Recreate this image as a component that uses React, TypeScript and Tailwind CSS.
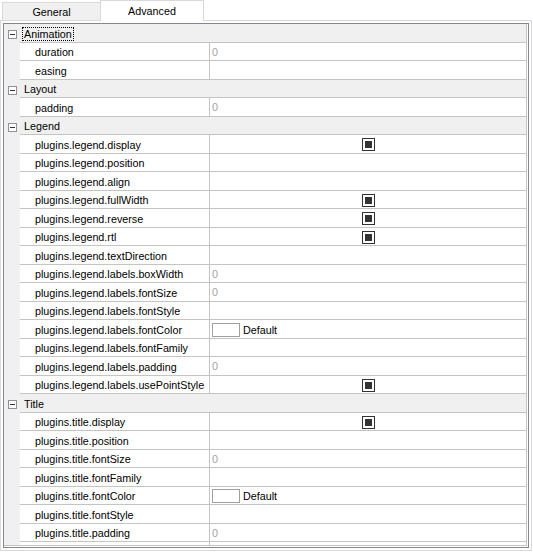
type ValueKind = "num" | "check" | "color" | undefined;

interface Prop {
  name: string;
  value?: ValueKind;
}

interface Section {
  title: string;
  focused?: boolean;
  rows: Prop[];
}

const sections: Section[] = [
  {
    title: "Animation",
    focused: true,
    rows: [{ name: "duration", value: "num" }, { name: "easing" }],
  },
  { title: "Layout", rows: [{ name: "padding", value: "num" }] },
  {
    title: "Legend",
    rows: [
      { name: "plugins.legend.display", value: "check" },
      { name: "plugins.legend.position" },
      { name: "plugins.legend.align" },
      { name: "plugins.legend.fullWidth", value: "check" },
      { name: "plugins.legend.reverse", value: "check" },
      { name: "plugins.legend.rtl", value: "check" },
      { name: "plugins.legend.textDirection" },
      { name: "plugins.legend.labels.boxWidth", value: "num" },
      { name: "plugins.legend.labels.fontSize", value: "num" },
      { name: "plugins.legend.labels.fontStyle" },
      { name: "plugins.legend.labels.fontColor", value: "color" },
      { name: "plugins.legend.labels.fontFamily" },
      { name: "plugins.legend.labels.padding", value: "num" },
      { name: "plugins.legend.labels.usePointStyle", value: "check" },
    ],
  },
  {
    title: "Title",
    rows: [
      { name: "plugins.title.display", value: "check" },
      { name: "plugins.title.position" },
      { name: "plugins.title.fontSize", value: "num" },
      { name: "plugins.title.fontFamily" },
      { name: "plugins.title.fontColor", value: "color" },
      { name: "plugins.title.fontStyle" },
      { name: "plugins.title.padding", value: "num" },
      // clipped by the bottom edge
      { name: "" },
    ],
  },
];

function MinusBox() {
  return (
    <span className="flex h-[9px] w-[9px] items-center justify-center border border-[#919191] bg-white">
      <span className="h-px w-[5px] bg-[#333]" />
    </span>
  );
}

function CategoryRow({ s }: { s: Section }) {
  return (
    <div className="flex h-[18.5px] shrink-0 bg-[#f0f0f0]">
      <div className="flex w-[16px] shrink-0 items-center pl-[4px] pt-[3px]">
        <MinusBox />
      </div>
      <div className="flex flex-1 items-center border-b border-[#c4c4c4] pl-[2px] pt-[2px]">
        <span
          className={
            s.focused
              ? "border border-dotted border-black px-px leading-[12px]"
              : "border border-transparent px-px leading-[12px]"
          }
        >
          {s.title}
        </span>
      </div>
    </div>
  );
}

function Value({ kind }: { kind: ValueKind }) {
  if (kind === "num") return <span className="pl-[2px] text-[#a39fa8]">0</span>;
  if (kind === "check")
    return (
      <div className="flex flex-1 justify-center pt-[1px]">
        <span className="flex h-[13px] w-[13px] items-center justify-center border border-[#333]">
          <span className="h-[7px] w-[7px] bg-[#333]" />
        </span>
      </div>
    );
  if (kind === "color")
    return (
      <div className="flex items-center gap-[3px] pl-[2px] pt-[1px]">
        <span className="h-[14px] w-[28px] border border-[#a0a0a0] bg-white" />
        <span>Default</span>
      </div>
    );
  return null;
}

function PropRow({ p }: { p: Prop }) {
  return (
    <div className="flex h-[18.5px] shrink-0">
      <div className="w-[16px] shrink-0 bg-[#f0f0f0]" />
      <div className="flex w-[190px] shrink-0 items-center whitespace-nowrap border-b border-r border-[#c4c4c4] bg-white pl-[15px] pt-[2px]">
        {p.name}
      </div>
      <div className="flex flex-1 items-center border-b border-[#c4c4c4] bg-white pt-px">
        <Value kind={p.value} />
      </div>
    </div>
  );
}

export default function App() {
  return (
    <div
      className="h-[553px] w-[533px] overflow-hidden bg-white text-[10.75px] text-black"
      style={{ fontFamily: '"Liberation Sans", Arial, sans-serif' }}
    >
      <div className="flex h-[20px] items-end pl-[2px]">
        <div className="flex h-[18px] w-[99px] items-center justify-center border border-b-0 border-[#d9d9d9] bg-[#f0f0f0] pt-px">
          General
        </div>
        <div className="relative z-10 -mb-px -ml-px flex h-[21px] w-[104px] items-center justify-center border border-b-0 border-[#d9d9d9] bg-white">
          Advanced
        </div>
      </div>
      <div className="h-[531px] w-[532px] border border-[#d9d9d9] bg-white p-[2px]">
        <div className="h-full border border-[#828790]">
          <div className="mb-px mr-px flex h-[calc(100%-1px)] flex-col overflow-hidden border-b border-r border-[#c4c4c4]">
            {sections.map((s) => (
              <div key={s.title} className="flex flex-col">
                <CategoryRow s={s} />
                {s.rows.map((p, i) => (
                  <PropRow key={s.title + i} p={p} />
                ))}
              </div>
            ))}
          </div>
        </div>
      </div>
    </div>
  );
}
